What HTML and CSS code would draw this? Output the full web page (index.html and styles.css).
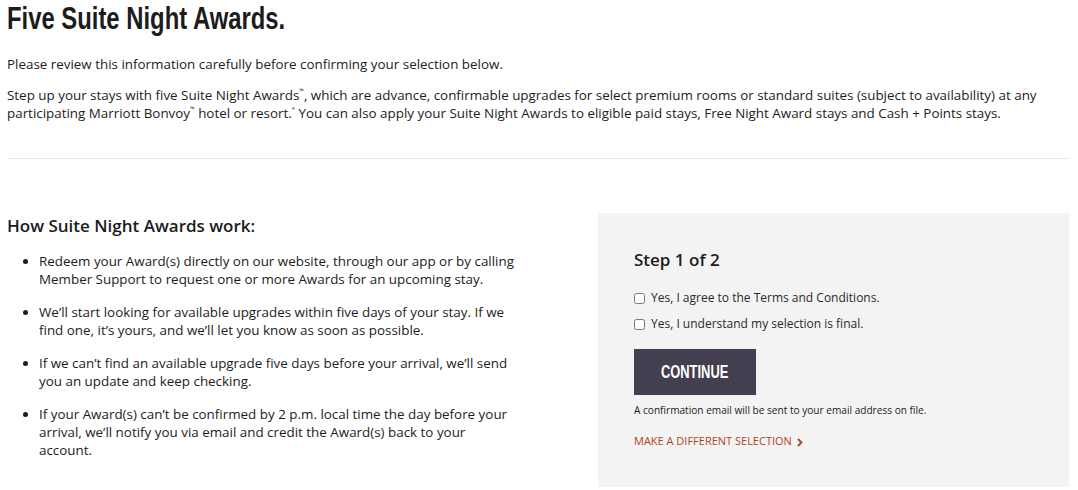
FILE: index.html
```html
<!DOCTYPE html>
<html>
<head>
    <title>Five Suite Night Awards</title>
    <link rel="stylesheet" href="styles.css">
</head>
<body>
    <div class="page">
        <h1 class="title"><span class="narrow">Five Suite Night Awards.</span></h1>
        <p class="intro">Please review this information carefully before confirming your selection below.</p>
        <p class="intro">Step up your stays with five Suite Night Awards<span class="tm">™</span>, which are advance, confirmable upgrades for select premium rooms or standard suites (subject to availability) at any participating Marriott Bonvoy<span class="tm">™</span> hotel or resort.<span class="tm">*</span> You can also apply your Suite Night Awards to eligible paid stays, Free Night Award stays and Cash + Points stays.</p>
        <hr class="divider">

        <div class="columns">
            <div class="how">
                <h3>How Suite Night Awards work:</h3>
                <ul>
                    <li>Redeem your Award(s) directly on our website, through our app or by calling Member Support to request one or more Awards for an upcoming stay.</li>
                    <li>We’ll start looking for available upgrades within five days of your stay. If we find one, it’s yours, and we’ll let you know as soon as possible.</li>
                    <li>If we can’t find an available upgrade five days before your arrival, we’ll send you an update and keep checking.</li>
                    <li>If your Award(s) can’t be confirmed by 2 p.m. local time the day before your arrival, we’ll notify you via email and credit the Award(s) back to your account.</li>
                </ul>
            </div>
            <div class="step">
                <h4>Step 1 of 2</h4>
                <label class="check"><input type="checkbox"> Yes, I agree to the Terms and Conditions.</label>
                <label class="check"><input type="checkbox"> Yes, I understand my selection is final.</label>
                <button class="btn" type="button"><span class="narrow">CONTINUE</span></button>
                <p class="note">A confirmation email will be sent to your email address on file.</p>
                <a class="other" href="#">MAKE A DIFFERENT SELECTION
                    <svg class="chev" width="6" height="9" viewBox="0 0 6 9"><polyline points="1,1 4.5,4.5 1,8" fill="none" stroke="#b1441c" stroke-width="1.8"/></svg>
                </a>
            </div>
        </div>
    </div>
</body>
</html>
```
FILE: styles.css
```css
body {
    margin: 0;
    font-family: "Open Sans", Arial, sans-serif;
    color: #1c1c1c;
    background: white;
}

.page {
    padding: 0 9px 0 7px;
}

.narrow {
    display: inline-block;
    transform: scaleX(0.745);
    transform-origin: left center;
    white-space: nowrap;
}

.title {
    font-family: "Liberation Sans", Arial, sans-serif;
    font-size: 32px;
    line-height: 36px;
    font-weight: bold;
    margin: 0;
    color: #1c1c1c;
}

.intro {
    font-size: 13.4px;
    line-height: 18px;
    margin: 0 0 13px 0;
}

.intro:first-of-type {
    margin-top: 19px;
}

.tm {
    font-size: 6px;
    line-height: 10px;
    vertical-align: top;
}

.divider {
    border: none;
    border-top: 1px solid #e6e6e6;
    margin: 36px 0 0 0;
}

.columns {
    display: flex;
    margin-top: 54px;
}

.how {
    width: 540px;
}

.how h3 {
    font-size: 17px;
    font-weight: 600;
    margin: 1px 0 14px 0;
    line-height: 24px;
}

.how ul {
    margin: 0;
    padding-left: 32px;
    width: 478px;
}

.how li {
    font-size: 13.4px;
    line-height: 18px;
    margin-bottom: 15px;
}

.step {
    flex: 1;
    margin-left: 51px;
    background: #f3f3f3;
    padding: 35px 36px 39px 36px;
    display: flex;
    flex-direction: column;
    align-items: flex-start;
}

.step h4 {
    font-size: 17px;
    font-weight: 600;
    margin: 0 0 18px 0;
    line-height: 24px;
}

.check {
    font-size: 12px;
    line-height: 16px;
    color: #2a2a2a;
    margin-bottom: 10px;
    display: flex;
    align-items: center;
}

.check input {
    width: 11px;
    height: 11px;
    margin: 0 6px 0 0;
}

.btn {
    margin-top: 7px;
    width: 122px;
    height: 46px;
    padding: 0;
    background: #433f50;
    color: white;
    border: none;
    font-family: "Liberation Sans", Arial, sans-serif;
    font-weight: bold;
    font-size: 19px;
    cursor: pointer;
}

.btn .narrow {
    transform: scaleX(0.68);
    transform-origin: center center;
}

.note {
    font-size: 10.1px;
    margin: 8px 0 0 0;
    line-height: 14px;
}

.other {
    font-size: 11px;
    margin-top: 16px;
    color: #b1441c;
    text-decoration: none;
}

.chev {
    margin-left: 2px;
    vertical-align: -2px;
}
```
